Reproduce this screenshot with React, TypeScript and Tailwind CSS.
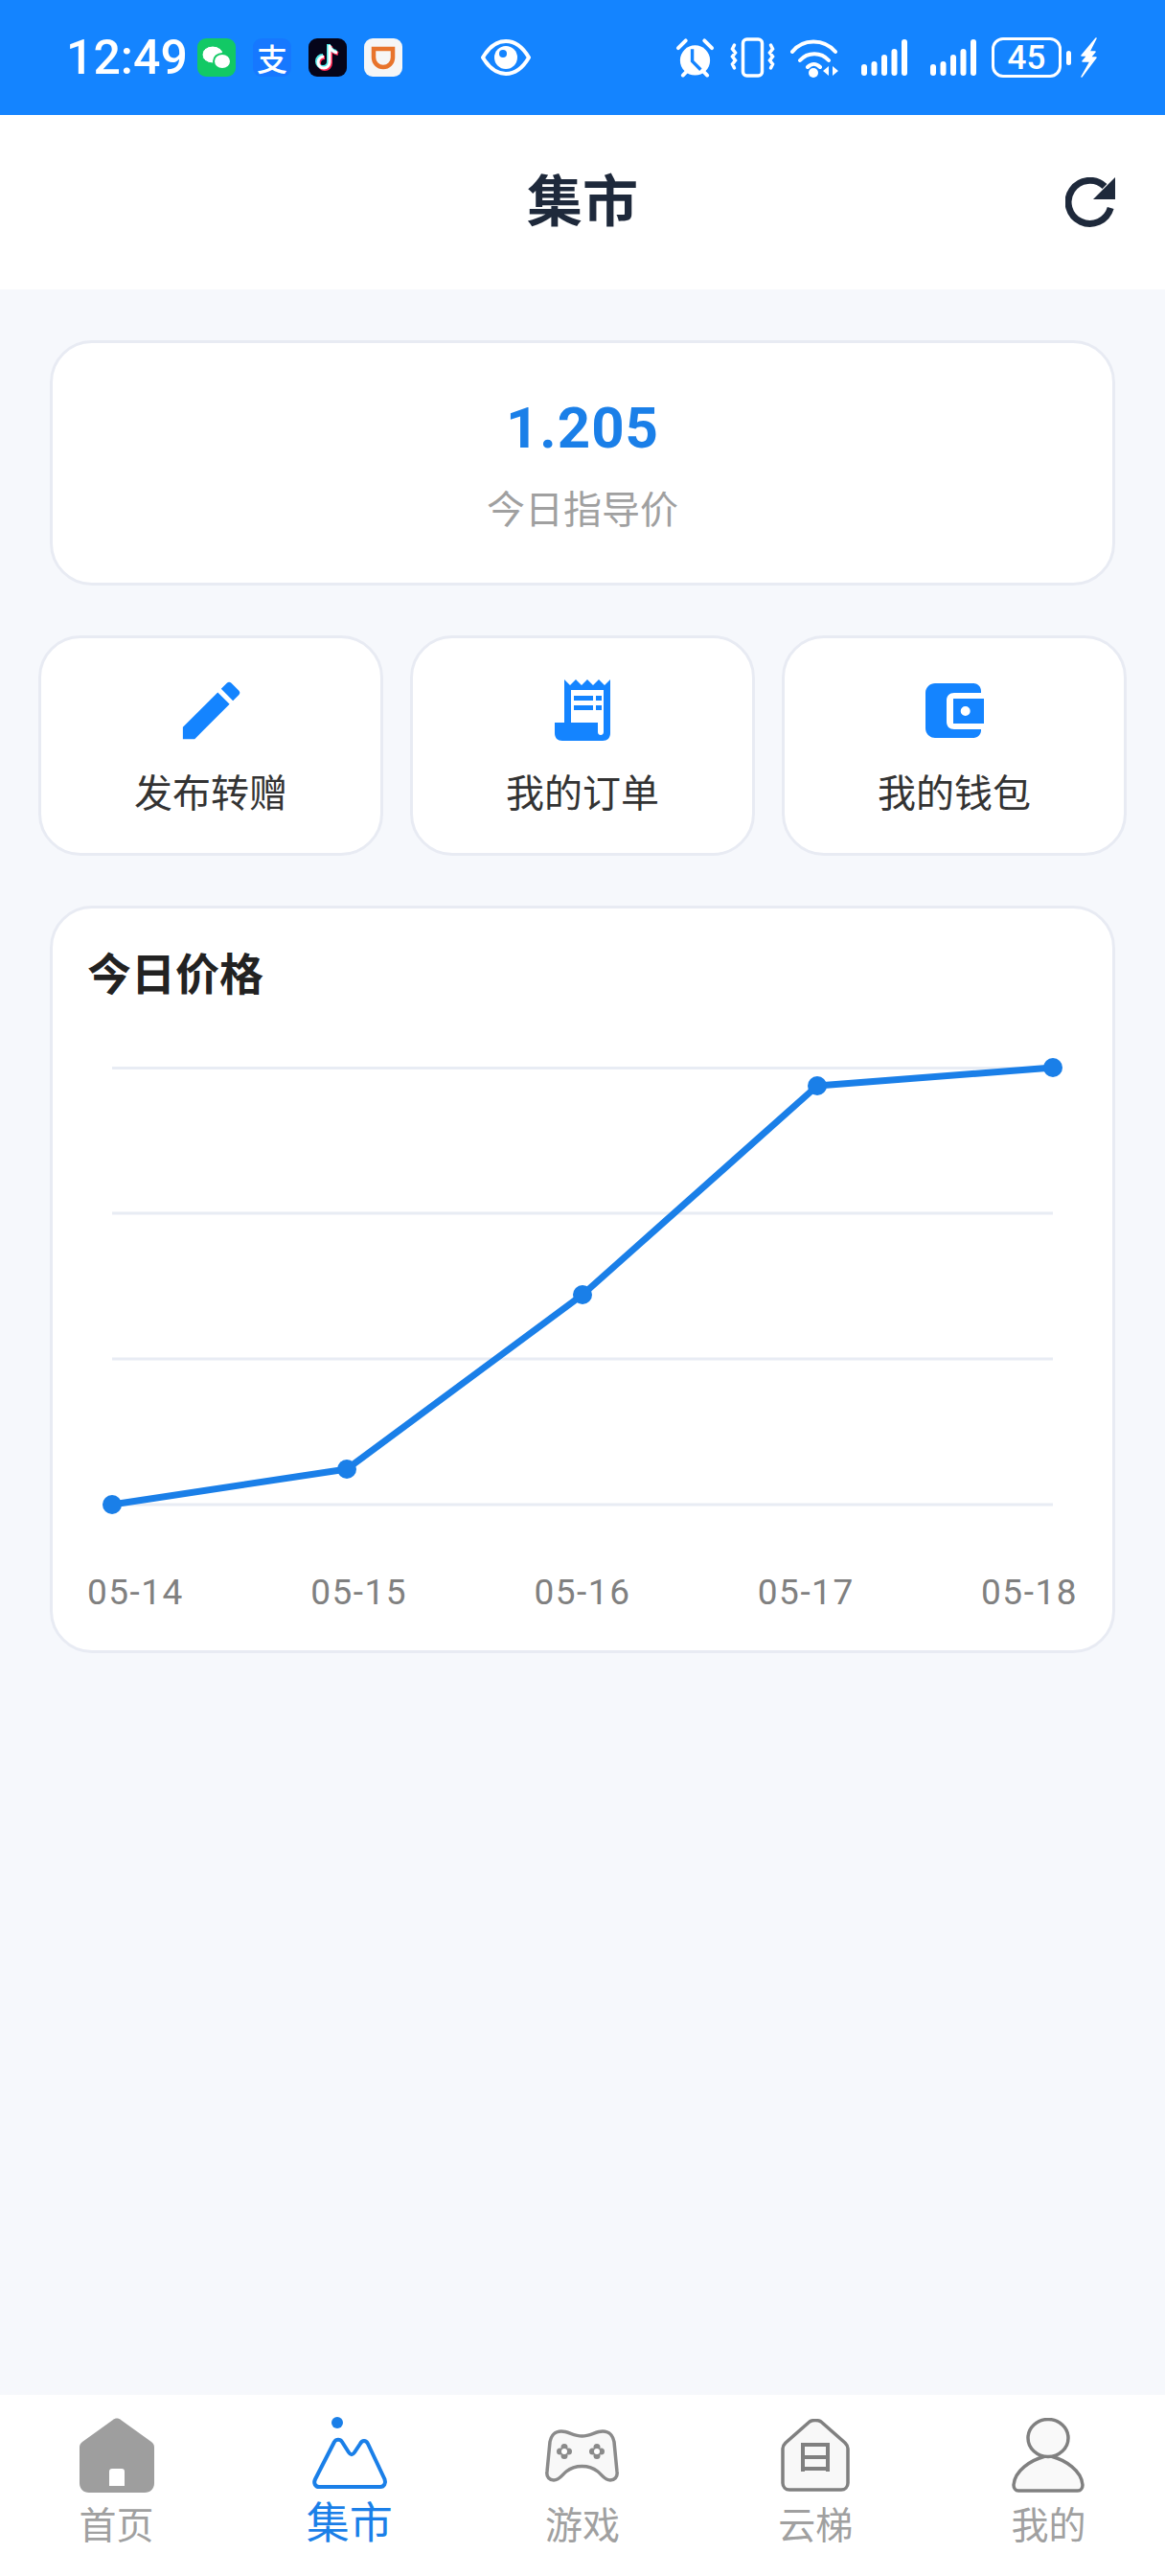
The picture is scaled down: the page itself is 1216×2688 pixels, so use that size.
import React from 'react';

const CJK = "font-['Noto_Sans_CJK_SC','Noto_Sans',sans-serif]";

const points = [
  [117, 1570],
  [362, 1533],
  [608, 1351],
  [853, 1133],
  [1099, 1114],
];

const Pencil = () => (
  <svg width="79" height="79" viewBox="0 0 24 24" fill="#1484ff">
    <path d="M3 17.25V21h3.75L17.81 9.94l-3.75-3.75L3 17.25zM20.71 7.04a1 1 0 0 0 0-1.41l-2.34-2.34a1 1 0 0 0-1.41 0l-1.83 1.83 3.75 3.75 1.83-1.83z" />
  </svg>
);

const Receipt = () => (
  <svg width="59" height="65" viewBox="0 0 59 65" fill="#1484ff">
    <path
      fillRule="evenodd"
      d="M10 0l6 6 6-6 6 6 6-6 6 6 6-6 6 6 6-6V56c0 5-3 8-8 8H8c-5 0-8-3-8-8V45h10zM17 11V45H45V55c0 4 6 4 6 0V11zM20 17h20v5H20zM20 27h20v5H20zM43 17h6v5h-6zM43 27h6v5h-6z"
    />
  </svg>
);

const Wallet = () => (
  <svg width="61" height="57" viewBox="0 0 61 57" fill="#1484ff">
    <path
      fillRule="evenodd"
      d="M10 0H50c4 0 8 3 8 8V10H30c-5 0-8 3-8 8V40c0 5 3 8 8 8H58V49c0 4-3 8-8 8H10C5 57 0 53 0 47V10C0 4 5 0 10 0zM29 16H61V42H29zM41.700 24a5 5 0 1 0 0 10 5 5 0 0 0 0-10z"
    />
  </svg>
);

const Refresh = () => (
  <svg width="52" height="52" viewBox="0 0 52 52" fill="none">
    <path d="M41 9.500A22.500 22.500 0 1 0 47.200 32" stroke="#1e293b" strokeWidth="7" />
    <path d="M52 0V23H29z" fill="#1e293b" />
  </svg>
);

const HomeIcon = () => (
  <svg width="80" height="80" viewBox="0 0 80 80" fill="#9e9e9e">
    <path fillRule="evenodd" d="M36 3c2-2 6-2 8 0l32 23c2 1.500 3 3 3 6V69c0 6-4 10-10 10H11C5 79 1 75 1 69V32c0-3 1-4.500 3-6zM35 54c-2 0-3 1-3 3v15h16V57c0-2-1-3-3-3z" />
  </svg>
);

const MarketIcon = () => (
  <svg width="80" height="80" viewBox="0 0 80 80" fill="none" stroke="#1a7fe8" strokeWidth="4">
    <circle cx="27" cy="6" r="6" fill="#1a7fe8" stroke="none" />
    <path d="M8 73h64c4 0 6-4 4.500-8L59 28c-2-4-6-4-8 0l-6 9c-2 3-4 3-6 0l-7-11c-2-3-6-3-8 0L4 65c-2 4 0 8 4 8z" strokeLinejoin="round" />
  </svg>
);

const DPad = ({ x }: { x: number }) => (
  <g>
    <circle cx={x - 4.5} cy="23" r="3.500" fill="#8a8a8a" stroke="none" />
    <circle cx={x + 4.5} cy="23" r="3.500" fill="#8a8a8a" stroke="none" />
    <circle cx={x} cy="18.500" r="3.500" fill="#8a8a8a" stroke="none" />
    <circle cx={x} cy="27.500" r="3.500" fill="#8a8a8a" stroke="none" />
    <circle cx={x} cy="23" r="3" fill="white" stroke="none" />
  </g>
);

const GameIcon = () => (
  <svg width="77" height="55" viewBox="0 0 77 55" fill="#f8f8f8" stroke="#8a8a8a" strokeWidth="3.500">
    <path
      d="M17 2C24 2 30 7 38.500 7S53 2 60 2C67 2 71 7 72 13L75 44C76 50 72 53 68 53C62 53 60 48 55 44C50 40 45 38.500 38.500 38.500S27 40 22 44C17 48 15 53 9 53C5 53 1 50 2 44L5 13C6 7 10 2 17 2Z"
      strokeLinejoin="round"
    />
    <DPad x={20} />
    <DPad x={54} />
  </svg>
);

const LadderIcon = () => (
  <svg width="72" height="76" viewBox="0 0 72 76" fill="#f8f8f8" stroke="#808080" strokeWidth="3.500">
    <path d="M30 3c3-2 9-2 12 0l25 22c2 2 3 3 3 6v36c0 4-3 7-7 7H9c-4 0-7-3-7-7V31c0-3 1-4 3-6z" strokeLinejoin="round" />
    <path d="M23 27h26M23 40h26M23 52h26M23 25v30M49 25v30" fill="none" strokeWidth="4" />
  </svg>
);

const UserIcon = () => (
  <svg width="76" height="78" viewBox="0 0 76 78" fill="#f9f9f9" stroke="#808080" strokeWidth="3.500">
    <path d="M35 40C20 44 3 55 2 70c0 3 2 6 5 6h62c3 0 5-3 5-6-1-15-18-26-33-30" strokeLinejoin="round" />
    <ellipse cx="38" cy="21" rx="21" ry="19.500" />
  </svg>
);

// status bar pieces, all small white drawings
const Wifi = () => (
  <svg width="50" height="42" viewBox="0 0 50 42" fill="none" stroke="white" strokeWidth="4" strokeLinecap="round">
    <path d="M2 15C13 1 35 1 47 15M10 24c8-9 22-9 30 0M18 31c4-4 9-4 13 0" />
    <circle cx="24" cy="37" r="5" fill="white" stroke="none" />
    <path d="M40 30v10l-6-5zM44 30v10l6-5z" fill="white" stroke="none" />
  </svg>
);

const Signal = () => (
  <svg width="48" height="38" viewBox="0 0 48 38" fill="white">
    <rect x="0" y="26" width="6" height="12" rx="3" />
    <rect x="10.500" y="23" width="6" height="15" rx="3" />
    <rect x="21" y="16" width="6" height="22" rx="3" />
    <rect x="31.500" y="10" width="6" height="28" rx="3" />
    <rect x="42" y="0" width="6" height="38" rx="3" />
  </svg>
);

const StatusBar = () => (
  <div className="h-[120px] bg-[#1484ff] flex items-center text-white">
    <span className="ml-[69px] w-[123px] font-['Roboto',sans-serif] font-medium text-[50px] leading-none">12:49</span>
    <div className="ml-[14px] flex gap-[18px]">
      <div className="w-[40px] h-[40px] rounded-[9px] bg-[#12c965] flex items-center justify-center">
        <svg width="32" height="28" viewBox="0 0 32 28" fill="white">
          <ellipse cx="12" cy="11" rx="11" ry="9" stroke="#12c965" strokeWidth="1" />
          <ellipse cx="22" cy="18" rx="9" ry="8" stroke="#12c965" strokeWidth="2" />
        </svg>
      </div>
      <div className="w-[40px] h-[40px] rounded-[9px] bg-[#1678ff] flex items-center justify-center">
        <span className={`${CJK} text-[32px] font-medium leading-none`}>支</span>
      </div>
      <div className="w-[40px] h-[40px] rounded-[9px] bg-[#05051a] flex items-center justify-center">
        <svg width="26" height="30" viewBox="0 0 26 30" fill="none">
          <path d="M15 2v18a6 6 0 1 1-6-6M15 3c1 4 4 6 8 7" stroke="#ff2a55" strokeWidth="4" transform="translate(1 1)" />
          <path d="M15 2v18a6 6 0 1 1-6-6M15 3c1 4 4 6 8 7" stroke="#4de8e8" strokeWidth="4" transform="translate(-1 -1)" />
          <path d="M15 2v18a6 6 0 1 1-6-6M15 3c1 4 4 6 8 7" stroke="white" strokeWidth="3" />
        </svg>
      </div>
      <div className="w-[40px] h-[40px] rounded-[9px] bg-[#f6f6f6] flex items-center justify-center">
        <svg width="28" height="28" viewBox="0 0 28 28" fill="none" stroke="#e8742c" strokeWidth="4.500">
          <path d="M4 5H24V14A10 10 0 0 1 4 14z" />
        </svg>
      </div>
    </div>
    <svg className="ml-[82px]" width="52" height="40" viewBox="0 0 52 40" fill="none">
      <path d="M2 20C9 8 17 3 26 3s17 5 24 17c-7 12-15 17-24 17S9 32 2 20z" stroke="white" strokeWidth="4" strokeLinejoin="round" />
      <circle cx="26" cy="20" r="12" fill="white" />
      <circle cx="23" cy="16" r="4" fill="#1484ff" />
    </svg>
    <div className="ml-auto mr-[71px] flex items-center">
      <svg width="41" height="44" viewBox="0 0 42 44" fill="white">
        <circle cx="21" cy="25" r="16" />
        <path d="M3 12l8-8M39 12l-8-8M8 41l4-4M34 41l-4-4" stroke="white" strokeWidth="4" strokeLinecap="round" />
        <path d="M18 13v13l9 9" stroke="#1484ff" strokeWidth="3.500" fill="none" />
      </svg>
      <svg className="ml-[16px]" width="47" height="42" viewBox="0 0 46 42" fill="none" stroke="white" strokeWidth="3.500">
        <rect x="13" y="2" width="20" height="38" rx="4" />
        <path d="M4 8l-2 4 3 4-3 4 3 4-3 4 2 4M42 8l2 4-3 4 3 4-3 4 3 4-2 4" strokeLinecap="round" />
      </svg>
      <div className="ml-[16px]"><Wifi /></div>
      <div className="ml-[24px]"><Signal /></div>
      <div className="ml-[24px]"><Signal /></div>
      <div className="ml-[16px] w-[73px] h-[42px] border-[3.5px] border-white rounded-[12px] flex items-center justify-center font-['Roboto',sans-serif] font-medium text-[35px] leading-none">45</div>
      <div className="ml-[5px] w-[5px] h-[15px] bg-white rounded-full" />
      <svg className="ml-[9px]" width="18" height="42" viewBox="0 0 18 42" fill="white" stroke="white" strokeWidth="1.500" strokeLinejoin="round">
        <path d="M17 1L2 19H8L3 25H11L2 41L17 21H11L16 15H10Z" />
      </svg>
    </div>
  </div>
);

const actions = [
  { label: '发布转赠', icon: <Pencil /> },
  { label: '我的订单', icon: <Receipt /> },
  { label: '我的钱包', icon: <Wallet /> },
];

const tabs = [
  { label: '首页', icon: <HomeIcon /> },
  { label: '集市', icon: <MarketIcon />, active: true },
  { label: '游戏', icon: <GameIcon /> },
  { label: '云梯', icon: <LadderIcon /> },
  { label: '我的', icon: <UserIcon /> },
];

export default function App() {
  const line = points.map((p) => `${p[0] - 55},${p[1] - 1090}`).join(' ');

  return (
    <div className={`w-[1216px] h-[2688px] flex flex-col bg-[#f6f8fc] ${CJK}`}>
      <StatusBar />

      <header className="relative h-[182px] bg-white flex items-center justify-center pb-[10px]">
        <h1 className="text-[58px] font-bold text-[#1e293b] leading-none">集市</h1>
        <div className="absolute right-[52px] top-[65px]"><Refresh /></div>
      </header>

      <main className="flex-1 flex flex-col">
        <section className="mx-[52px] mt-[53px] h-[256px] bg-white border-[3px] border-[#e8ebf3] rounded-[44px] flex flex-col items-center justify-center">
          <div className="font-['Roboto',sans-serif] text-[60px] font-bold text-[#1a7fe8] leading-none tracking-[1px]">1.205</div>
          <div className="mt-[32px] text-[40px] text-[#a0a0a0] leading-none">今日指导价</div>
        </section>

        <div className="mx-[40px] mt-[52px] grid grid-cols-3 gap-[28px]">
          {actions.map((a) => (
            <div key={a.label} className="h-[230px] bg-white border-[3px] border-[#e8ebf3] rounded-[44px] flex flex-col items-center pt-[35px]">
              <div className="h-[80px] flex items-center justify-center">{a.icon}</div>
              <div className="mt-[24px] text-[40px] text-[#333333] leading-none">{a.label}</div>
            </div>
          ))}
        </div>

        <section className="mx-[52px] mt-[52px] h-[780px] bg-white border-[3px] border-[#e8ebf3] rounded-[44px] px-[36px] pt-[42px]">
          <h2 className="text-[46px] font-bold text-[#222222] leading-none">今日价格</h2>
          <svg className="mt-[54px] ml-[-36px]" width="1106" height="520" viewBox="0 0 1106 520">
            {[1114.5, 1266, 1418, 1570].map((y) => (
              <line key={y} x1="62" x2="1044" y1={y - 1090} y2={y - 1090} stroke="#e8ecf4" strokeWidth="3" />
            ))}
            <polyline points={line} fill="none" stroke="#1a7fe8" strokeWidth="7" strokeLinejoin="round" />
            {points.map((p) => (
              <circle key={p[0]} cx={p[0] - 55} cy={p[1] - 1090} r="10" fill="#1a7fe8" />
            ))}
          </svg>
          <div className="mt-[33px] flex justify-between font-['Roboto',sans-serif] text-[37px] text-[#808080] leading-none">
            {['05-14', '05-15', '05-16', '05-17', '05-18'].map((d) => (
              <span key={d} className="tracking-[1.5px]">{d}</span>
            ))}
          </div>
        </section>
      </main>

      <nav className="h-[189px] bg-white grid grid-cols-5 pt-[22px]">
        {tabs.map((t) => (
          <div key={t.label} className="flex flex-col items-center">
            <div className="h-[82px] flex items-center justify-center">{t.icon}</div>
            <div className={t.active ? 'mt-[4px] text-[45px] text-[#1a7fe8] leading-none' : 'mt-[10px] text-[39px] text-[#a0a0a0] leading-none'}>{t.label}</div>
          </div>
        ))}
      </nav>
    </div>
  );
}
